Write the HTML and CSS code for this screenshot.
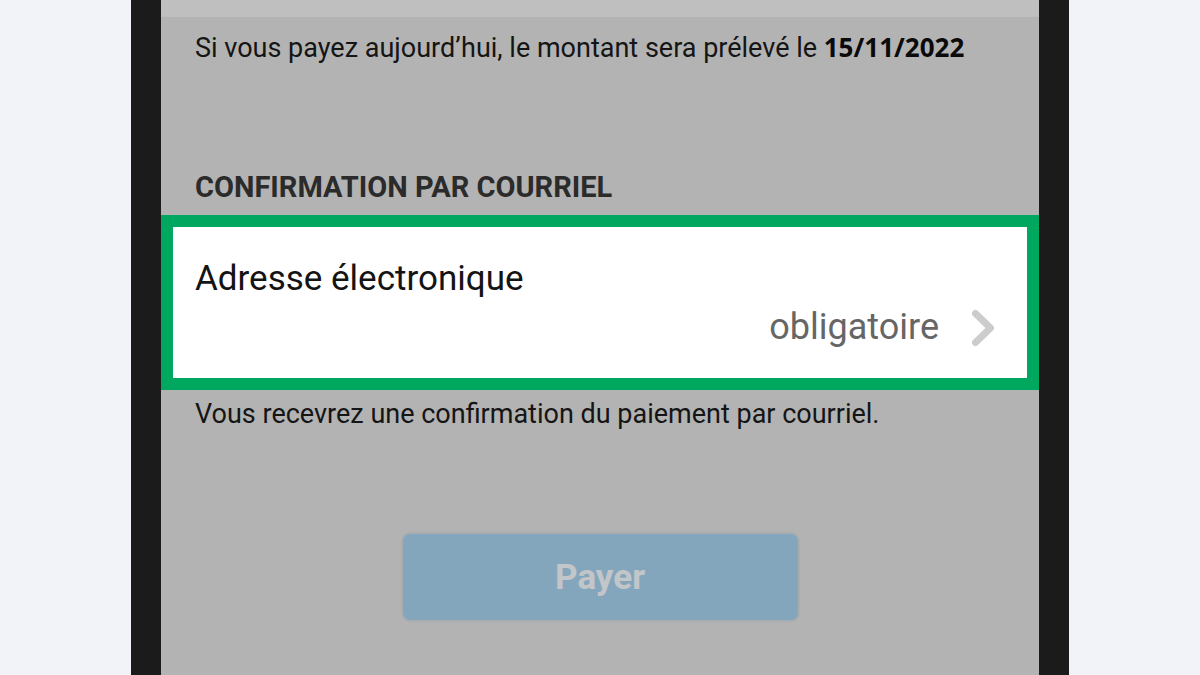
FILE: index.html
```html
<!DOCTYPE html>
<html lang="fr">
<head>
  <meta charset="UTF-8">
  <title>Paiement</title>
  <link rel="stylesheet" href="styles.css">
</head>
<body>
  <div class="phone">
    <div class="screen">
      <div class="top-strip"></div>
      <p class="notice">Si vous payez aujourd’hui, le montant sera prélevé le <span class="date">15/11/2022</span></p>

      <h2 class="section-title">CONFIRMATION PAR COURRIEL</h2>
      <div class="email-field">
        <div class="field-label">Adresse électronique</div>
        <div class="field-value">
          <span>obligatoire</span>
          <svg class="chevron" width="24" height="38" viewBox="0 0 24 38">
            <path d="M4.5 4.5 L19.5 19 L4.5 33.5" fill="none" stroke="#cccccc" stroke-width="7" stroke-linecap="round" stroke-linejoin="round"/>
          </svg>
        </div>
      </div>
      <p class="hint">Vous recevrez une confirmation du paiement par courriel.</p>

      <div class="actions">
        <button class="pay-btn" disabled>Payer</button>
      </div>
    </div>
  </div>
</body>
</html>
```

FILE: styles.css
```css
html, body {
  margin: 0;
  height: 100%;
}
body {
  background: #f2f3f8;
  font-family: Roboto, "Liberation Sans", sans-serif;
  display: flex;
  justify-content: center;
  overflow: hidden;
}
.phone {
  width: 878px;
  height: 675px;
  background: #1b1b1b;
  padding: 0 30px;
}
.screen {
  background: #b3b3b3;
  height: 100%;
  display: flex;
  flex-direction: column;
}
.top-strip {
  height: 17px;
  background: #bfbfbf;
}
.notice {
  margin: 14px 0 0;
  padding: 0 34px;
  font-size: 27px;
  line-height: 32px;
  color: #151515;
}
.date {
  font-family: "Noto Sans", sans-serif;
  font-size: 26px;
  font-weight: bold;
  color: #0a0a0a;
}
.section-title {
  margin: 105px 0 0;
  padding: 0 34px;
  font-size: 29px;
  line-height: 36px;
  font-weight: bold;
  color: #2b2b2b;
}
.email-field {
  margin-top: 10px;
  border: 12px solid #00a85f;
  background: #fff;
  box-sizing: border-box;
  height: 175px;
  padding: 31px 32px 0 22px;
}
.field-label {
  font-size: 35px;
  line-height: 42px;
  color: #141414;
}
.field-value {
  display: flex;
  justify-content: flex-end;
  align-items: center;
  gap: 32px;
  margin-top: 6px;
  font-size: 36px;
  line-height: 42px;
  color: #666;
}
.chevron {
  margin-top: 1px;
}
.hint {
  margin: 8px 0 0;
  padding: 0 34px;
  font-size: 27px;
  line-height: 32px;
  color: #151515;
}
.actions {
  display: flex;
  justify-content: center;
  margin-top: 102px;
}
.pay-btn {
  width: 399px;
  height: 90px;
  background: #84a6bd;
  border: 2px solid #a9adb0;
  border-radius: 9px;
  font-family: Roboto, sans-serif;
  font-size: 35px;
  font-weight: bold;
  color: #c3c6c8;
}
```
